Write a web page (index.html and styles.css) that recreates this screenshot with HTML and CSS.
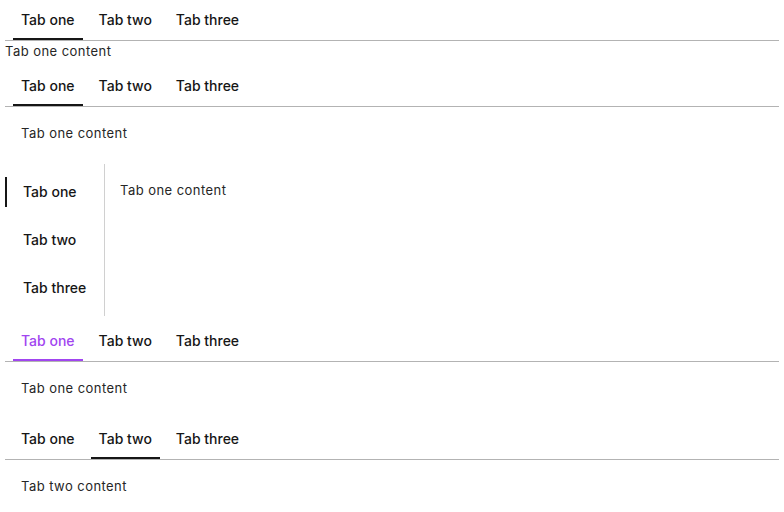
FILE: index.html
```html
<!DOCTYPE html>
<html lang="en">
<head>
<meta charset="utf-8">
<title>Tabs</title>
<link rel="stylesheet" href="styles.css">
</head>
<body>
<main class="page">
  <section class="tabs">
    <div class="tablist" role="tablist">
      <button class="tab active" role="tab">Tab one</button>
      <button class="tab" role="tab">Tab two</button>
      <button class="tab" role="tab">Tab three</button>
    </div>
    <div class="panel plain">Tab one content</div>
  </section>

  <section class="tabs">
    <div class="tablist" role="tablist">
      <button class="tab active" role="tab">Tab one</button>
      <button class="tab" role="tab">Tab two</button>
      <button class="tab" role="tab">Tab three</button>
    </div>
    <div class="panel">Tab one content</div>
  </section>

  <section class="tabs vertical">
    <div class="vtablist" role="tablist">
      <button class="vtab active" role="tab">Tab one</button>
      <button class="vtab" role="tab">Tab two</button>
      <button class="vtab" role="tab">Tab three</button>
    </div>
    <div class="panel vpanel">Tab one content</div>
  </section>

  <section class="tabs purple">
    <div class="tablist" role="tablist">
      <button class="tab active" role="tab">Tab one</button>
      <button class="tab" role="tab">Tab two</button>
      <button class="tab" role="tab">Tab three</button>
    </div>
    <div class="panel">Tab one content</div>
  </section>

  <section class="tabs">
    <div class="tablist" role="tablist">
      <button class="tab" role="tab">Tab one</button>
      <button class="tab active" role="tab">Tab two</button>
      <button class="tab" role="tab">Tab three</button>
    </div>
    <div class="panel">Tab two content</div>
  </section>
</main>
</body>
</html>
```

FILE: styles.css
```css
html, body {
  margin: 0;
  padding: 0;
  background: #ffffff;
}

body {
  font-family: Inter, Roboto, "Liberation Sans", sans-serif;
  color: #161616;
}

.page {
  display: flex;
  flex-direction: column;
  gap: 5px;
  padding: 0 5px;
}

.tablist {
  display: flex;
  gap: 8px;
  padding-left: 8px;
  border-bottom: 1px solid #b3b3b3;
}

.tab {
  font-family: inherit;
  font-size: 14px;
  font-weight: 550;
  letter-spacing: 0;
  color: #161616;
  background: none;
  border: none;
  border-bottom: 2px solid transparent;
  box-sizing: border-box;
  height: 40px;
  padding: 1px 8px 0;
  margin: 0;
  line-height: 37px;
  cursor: pointer;
}

.tab.active {
  border-bottom-color: #161616;
}

.purple .tab.active {
  color: #a145f0;
  border-bottom-color: #a145f0;
}

.panel {
  font-size: 13px;
  line-height: 20px;
  letter-spacing: 0.45px;
  color: #262626;
  padding: 16px;
}

.panel.plain {
  padding: 0;
}

.vertical {
  display: flex;
}

.vtablist {
  display: flex;
  flex-direction: column;
  box-sizing: border-box;
  width: 100px;
  flex: none;
  padding: 4px 0;
  border-right: 1px solid #d0d0d0;
}

.vtab {
  position: relative;
  font-family: inherit;
  font-size: 14px;
  font-weight: 550;
  letter-spacing: 0;
  color: #161616;
  background: none;
  border: none;
  box-sizing: border-box;
  height: 48px;
  padding: 0 0 2px 18px;
  margin: 0;
  text-align: left;
  cursor: pointer;
}

.vtab.active::before {
  content: "";
  position: absolute;
  left: 0;
  top: 9px;
  width: 2px;
  height: 30px;
  background: #161616;
}

.vpanel {
  padding: 16px 15px;
}
```
